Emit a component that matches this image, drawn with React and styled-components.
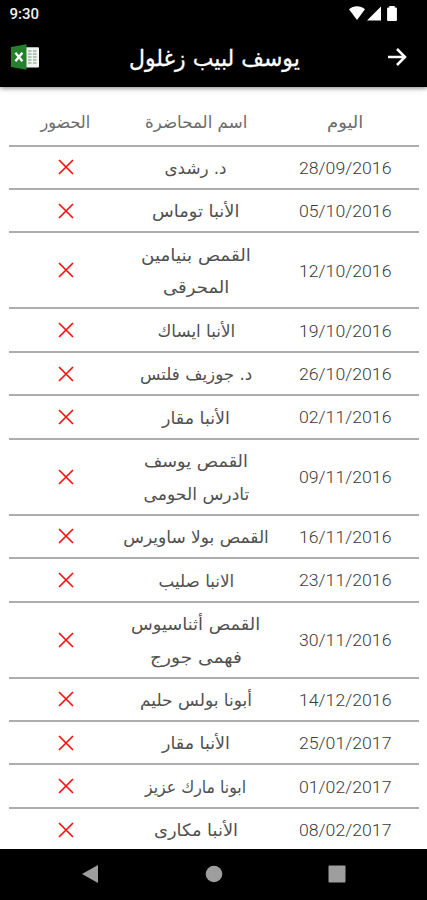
import React, { useLayoutEffect, useRef, useState } from "react";
import styled, { createGlobalStyle } from "styled-components";

const GlobalStyle = createGlobalStyle`
  * { box-sizing: border-box; }
  body { margin: 0; background: #fff; }
`;

const Screen = styled.div`
  width: 427px;
  height: 900px;
  display: flex;
  flex-direction: column;
  overflow: hidden;
  background: #fff;
  font-family: "DejaVu Sans", sans-serif;
`;

const StatusBar = styled.div`
  flex: none;
  height: 28px;
  padding: 0 29px 0 9px;
  display: flex;
  align-items: center;
  justify-content: space-between;
  background: #000;
  color: #f2f2f2;
  font: 500 15.5px/28px Roboto, sans-serif;
`;

const StatusIcons = styled.svg`
  display: block;
  width: 50px;
  height: 28px;
`;

const AppBar = styled.header`
  flex: none;
  height: 58.5px;
  padding: 0 19px 0 11px;
  display: grid;
  grid-template-columns: 30px 1fr 21px;
  align-items: center;
  background: #000;
  color: #fff;
  box-shadow: 0 1px 5px rgba(0, 0, 0, 0.5);
  z-index: 1;
`;

const Title = styled.h1`
  margin: 0;
  padding-top: 1px;
  text-align: center;
  font-size: 23px;
  font-weight: 400;
  line-height: 50px;
  -webkit-text-stroke: 0.3px #fff;
`;

const Icon = styled.svg`
  display: block;
  width: ${(p) => p.$w}px;
  height: ${(p) => p.$h}px;
`;

const Content = styled.main`
  flex: none;
  height: 754.5px;
  margin-bottom: 7.5px;
  padding: 11px 8px 0 9px;
  overflow: hidden;
`;

const Row = styled.div`
  direction: rtl;
  display: grid;
  grid-template-columns: 148px 150px 112px;
  align-items: center;
  justify-items: center;
  height: ${(p) => p.$height}px;
  border-bottom: 2px solid #adadad;
  color: ${(p) => p.$color || "#505050"};
`;

const NameCell = styled.div`
  display: flex;
  flex-direction: column;
  align-items: center;
  padding-top: 2px;
  font-size: 17px;
  line-height: 32.5px;
`;

const DateCell = styled.div`
  direction: ltr;
  padding-top: 1px;
  color: #3a3a3a;
  font-family: Roboto, sans-serif;
  font-weight: 300;
  font-size: 17.3px;
  line-height: 32px;
`;

const MarkCell = styled.div`
  padding-right: 0;
  padding-left: 1px;
`;

const NavBar = styled.nav`
  flex: none;
  height: 51.5px;
  padding: 0 80px;
  display: flex;
  align-items: center;
  justify-content: space-between;
  background: #000;
`;

const Label = styled.span`
  display: inline-block;
  white-space: nowrap;
  direction: rtl;
`;

/* Scales a line horizontally so that it occupies the given width. */
function FitText({ width, children }) {
  const ref = useRef(null);
  const [scale, setScale] = useState(1);
  useLayoutEffect(() => {
    setScale(width / ref.current.offsetWidth);
  }, [width]);
  return (
    <Label ref={ref} style={{ transform: `scaleX(${scale})` }}>
      {children}
    </Label>
  );
}

const Cross = () => (
  <Icon $w={16} $h={16} viewBox="0 0 16 16">
    <path d="M1 1 15 15M15 1 1 15" stroke="#f5150d" strokeWidth="1.7" fill="none" />
  </Icon>
);

const ExcelIcon = () => (
  <Icon $w={29} $h={26} viewBox="0 0 29 26">
    <rect x="14" y="3.2" width="14" height="20.3" rx="1" fill="#f1f4f1" />
    <path
      d="M17 7h3.5M22 7h3.5M17 10h3.5M22 10h3.5M17 13h3.5M22 13h3.5M17 16h3.5M22 16h3.5M17 19h3.5M22 19h3.5"
      stroke="#9bb5a0"
      strokeWidth="1.6"
    />
    <path d="M0 3 15.5 0.3V25.7L0 23Z" fill="#24802d" />
    <path d="M4.4 8.8 11.4 17.2M11.4 8.8 4.4 17.2" stroke="#fff" strokeWidth="2.3" />
  </Icon>
);

const ArrowIcon = () => (
  <Icon $w={20} $h={20} viewBox="0 0 20 20">
    <path d="M1 10H18M10 2 18 10 10 18" fill="none" stroke="#fff" strokeWidth="2.5" />
  </Icon>
);

const rows = [
  { date: "28/09/2016", name: [["د. رشدى", 62]] },
  { date: "05/10/2016", name: [["الأنبا توماس", 87]] },
  { date: "12/10/2016", name: [["القمص بنيامين", 110], ["المحرقى", 66]] },
  { date: "19/10/2016", name: [["الأنبا ايساك", 78]] },
  { date: "26/10/2016", name: [["د. جوزيف فلتس", 112]] },
  { date: "02/11/2016", name: [["الأنبا مقار", 68]] },
  { date: "09/11/2016", name: [["القمص يوسف", 104], ["تادرس الحومى", 106]] },
  { date: "16/11/2016", name: [["القمص بولا ساويرس", 146]] },
  { date: "23/11/2016", name: [["الانبا صليب", 76]] },
  { date: "30/11/2016", name: [["القمص أثناسيوس", 129], ["فهمى جورج", 92]] },
  { date: "14/12/2016", name: [["أبونا بولس حليم", 112]] },
  { date: "25/01/2017", name: [["الأنبا مقار", 68]] },
  { date: "01/02/2017", name: [["ابونا مارك عزيز", 101]] },
  { date: "08/02/2017", name: [["الأنبا مكارى", 84]] },
];

export default function App() {
  return (
    <Screen>
      <GlobalStyle />
      <StatusBar>
        <FitText width={30}>9:30</FitText>
        <StatusIcons viewBox="0 0 50 28" fill="#fff">
          <path d="M1 9.2C5.5 5.3 12.5 5.3 17 9.2L9 20Z" />
          <path d="M33 6.5V20.5H19Z" />
          <path d="M41.3 7.5V6h5.4v1.5h1.2q1 0 1 1v11.4q0 1-1 1h-7.8q-1 0-1-1V8.5q0-1 1-1Z" />
        </StatusIcons>
      </StatusBar>
      <AppBar>
        <ExcelIcon />
        <Title>
          <FitText width={171}>يوسف لبيب زغلول</FitText>
        </Title>
        <ArrowIcon />
      </AppBar>
      <Content>
        <Row $height={49} $color="#6c6c6c">
          <NameCell><FitText width={36}>اليوم</FitText></NameCell>
          <NameCell><FitText width={102}>اسم المحاضرة</FitText></NameCell>
          <NameCell><FitText width={50}>الحضور</FitText></NameCell>
        </Row>
        {rows.map((row) => (
          <Row key={row.date} $height={row.name.length > 1 ? 76 : 43.45}>
            <DateCell><FitText width={92}>{row.date}</FitText></DateCell>
            <NameCell>
              {row.name.map(([text, width]) => (
                <FitText key={text} width={width}>{text}</FitText>
              ))}
            </NameCell>
            <MarkCell><Cross /></MarkCell>
          </Row>
        ))}
      </Content>
      <NavBar>
        <Icon $w={20} $h={20} viewBox="0 0 20 20"><path d="M2 10 18 1V19Z" fill="#9e9e9e" /></Icon>
        <Icon $w={18} $h={18} viewBox="0 0 18 18"><circle cx="9" cy="9" r="8.3" fill="#9e9e9e" /></Icon>
        <Icon $w={20} $h={20} viewBox="0 0 20 20"><rect x="1.5" y="1.5" width="17" height="17" rx="1" fill="#9e9e9e" /></Icon>
      </NavBar>
    </Screen>
  );
}
